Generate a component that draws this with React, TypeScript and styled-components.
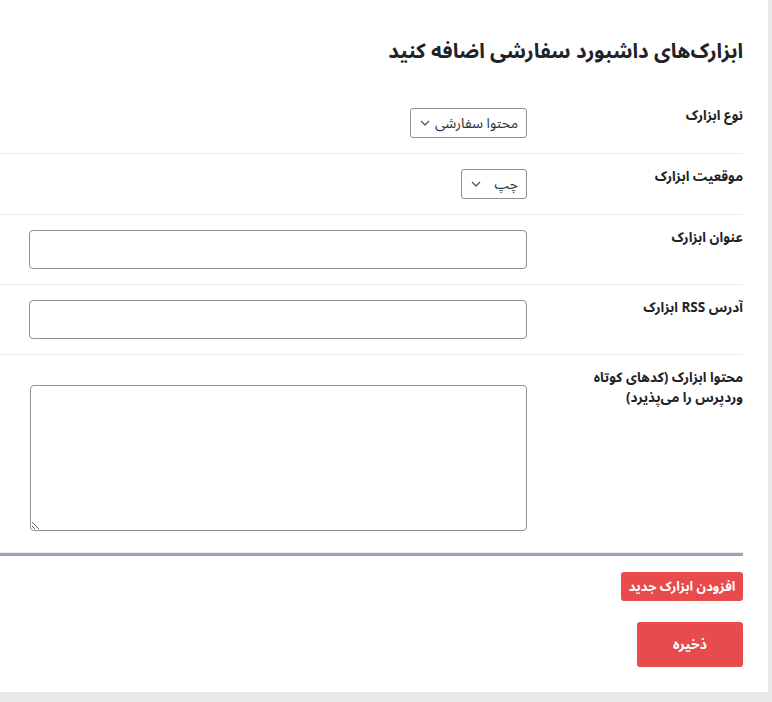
import React from 'react';
import styled, { createGlobalStyle } from 'styled-components';

const GlobalStyle = createGlobalStyle`
  html, body {
    margin: 0;
    padding: 0;
    background: #e8e8e8;
  }
  body {
    font-family: "Noto Sans Arabic", "DejaVu Sans", sans-serif;
    color: #1d2327;
  }
`;

const Panel = styled.div`
  direction: rtl;
  width: 768px;
  height: 692px;
  box-sizing: border-box;
  background: #fff;
  padding: 35px 25px 0 0;
`;

const Title = styled.h1`
  margin: 0 0 24px;
  font-size: 20.5px;
  line-height: 34px;
  font-weight: 700;
  color: #1d2327;
`;

const Table = styled.div`
  display: flex;
  flex-direction: column;
  border-bottom: 3px solid #9aa1c3;
`;

const Row = styled.div`
  display: grid;
  grid-template-columns: 216px 1fr;
  border-bottom: 1px solid #f1e9e9;
`;

const Label = styled.label`
  padding-top: 13px;
  font-size: 13.5px;
  line-height: 20px;
  font-weight: 700;
  color: #1d2327;
`;

const Cell = styled.div<{ $top?: number; $bottom?: number }>`
  padding: ${(p) => p.$top ?? 15}px 0 ${(p) => p.$bottom ?? 15}px;
  display: flex;
  justify-content: flex-start;
  align-items: flex-start;
`;

const SelectWrap = styled.div`
  position: relative;
  display: block;
`;

const Select = styled.select<{ $width: number }>`
  appearance: none;
  -webkit-appearance: none;
  display: block;
  width: ${(p) => p.$width}px;
  height: 30px;
  box-sizing: border-box;
  border: 1px solid #8c8f94;
  border-radius: 3px;
  background: #fff;
  padding: 0 8px 0 24px;
  font-family: inherit;
  font-size: 14px;
  color: #2c3338;
  direction: rtl;
`;

const Chevron = styled.svg`
  position: absolute;
  left: 10px;
  top: 11px;
  width: 10px;
  height: 8px;
  pointer-events: none;
`;

const TextInput = styled.input`
  display: block;
  width: 498px;
  height: 39px;
  box-sizing: border-box;
  border: 1px solid #8c8f94;
  border-radius: 4px;
  background: #fff;
  padding: 0 8px;
  font-family: inherit;
  font-size: 14px;
`;

const TextArea = styled.textarea`
  width: 497px;
  height: 146px;
  box-sizing: border-box;
  border: 1px solid #8c8f94;
  border-radius: 4px;
  background: #fff;
  font-family: inherit;
  font-size: 14px;
  display: block;
`;

const Actions = styled.div`
  display: flex;
  flex-direction: column;
  align-items: flex-start;
  gap: 21px;
  padding-top: 16px;
`;

const Button = styled.button<{ $big?: boolean }>`
  border: none;
  border-radius: 3px;
  background: #e84b4b;
  color: #fff;
  font-family: inherit;
  font-weight: 700;
  cursor: pointer;
  font-size: ${(p) => (p.$big ? 14 : 13)}px;
  width: ${(p) => (p.$big ? 106 : 122)}px;
  height: ${(p) => (p.$big ? 45 : 29)}px;
  padding: 0;
`;

const ArrowIcon = () => (
  <Chevron viewBox="0 0 10 8">
    <path d="M1 2 L5 6 L9 2" fill="none" stroke="#50575e" strokeWidth="1.3" />
  </Chevron>
);

const App: React.FC = () => (
  <>
    <GlobalStyle />
    <Panel>
      <Title>ابزارک‌های داشبورد سفارشی اضافه کنید</Title>
      <Table>
        <Row>
          <Label>نوع ابزارک</Label>
          <Cell>
            <SelectWrap>
              <Select $width={117} defaultValue="custom">
                <option value="custom">محتوا سفارشی</option>
                <option value="rss">RSS</option>
              </Select>
              <ArrowIcon />
            </SelectWrap>
          </Cell>
        </Row>
        <Row>
          <Label>موقعیت ابزارک</Label>
          <Cell>
            <SelectWrap>
              <Select $width={66} defaultValue="left">
                <option value="left">چپ</option>
                <option value="right">راست</option>
              </Select>
              <ArrowIcon />
            </SelectWrap>
          </Cell>
        </Row>
        <Row>
          <Label>عنوان ابزارک</Label>
          <Cell>
            <TextInput type="text" />
          </Cell>
        </Row>
        <Row>
          <Label>آدرس RSS ابزارک</Label>
          <Cell>
            <TextInput type="text" />
          </Cell>
        </Row>
        <Row>
          <Label>
            محتوا ابزارک (کدهای کوتاه
            <br />
            وردپرس را می‌پذیرد)
          </Label>
          <Cell $top={30} $bottom={21}>
            <TextArea />
          </Cell>
        </Row>
      </Table>
      <Actions>
        <Button type="button">افزودن ابزارک جدید</Button>
        <Button type="button" $big>ذخیره</Button>
      </Actions>
    </Panel>
  </>
);

export default App;
